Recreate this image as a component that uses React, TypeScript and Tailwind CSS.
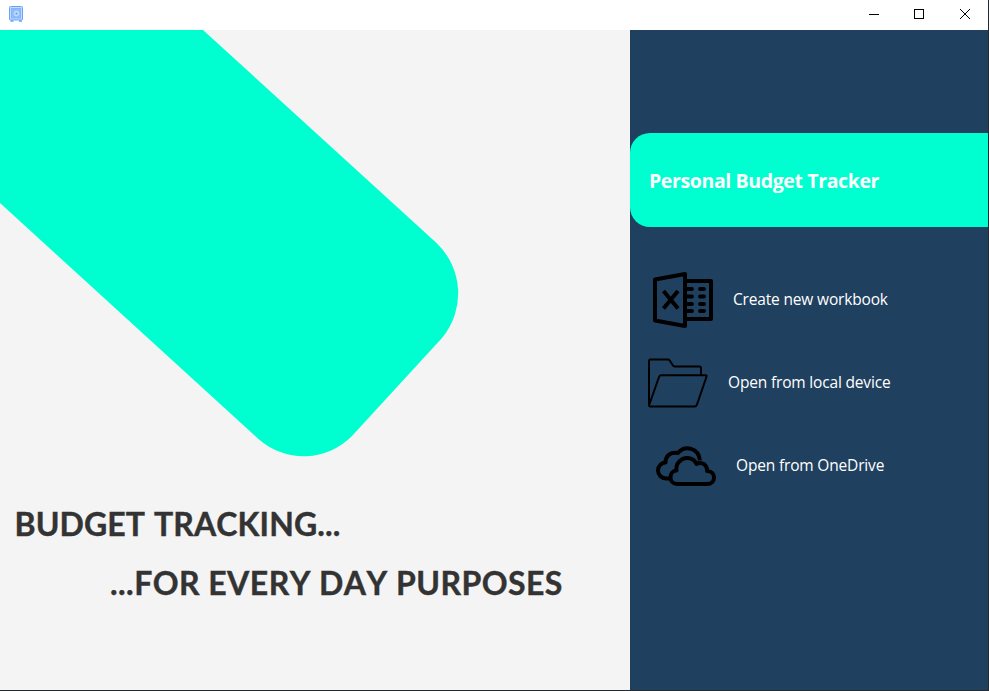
import React from "react";

function TitleBar() {
  return (
    <header className="flex h-[30px] shrink-0 items-start justify-between bg-white">
      <svg className="ml-2 mt-[5px] h-[18px] w-4" viewBox="0 0 16 18" fill="none">
        <rect x="1.500" y="1.500" width="13" height="13.500" rx="1" fill="#c3dcff" stroke="#6ba2f5" />
        <rect x="3.500" y="3.500" width="9" height="9.500" fill="#8fbafb" stroke="#85b4f8" />
        <circle cx="8.500" cy="8.500" r="2.400" fill="#a9ccff" stroke="#c9e0ff" />
        <circle cx="8.500" cy="8.500" r=".8" fill="#5c98f5" />
        <path d="M2.500 16h3M11 16h3" stroke="#6ba2f5" strokeWidth="1.400" />
      </svg>
      <svg className="h-[30px] w-[137px]" viewBox="0 0 137 30" fill="none" stroke="#000" strokeWidth="1">
        <path d="M18 14.500h10" />
        <rect x="63.500" y="9.500" width="9" height="9" />
        <path d="M109 9l10 10M119 9l-10 10" />
      </svg>
    </header>
  );
}

function WorkbookIcon() {
  return (
    <svg className="h-14 w-[60px] shrink-0" viewBox="0 0 60 56" fill="none" stroke="#000" strokeWidth="4" strokeLinejoin="round">
      <path d="M2 7.500L32 2v52L2 48.500z" />
      <path d="M33 9h25v38H33" />
      <path d="M10.500 19L25 36.500M25 19L10.500 36.500" />
      <path d="M34 17h5M34 24.500h5M34 32h5M34 39h5M47 17h4M47 24.500h4M47 32h4M47 39h4" strokeWidth="3.800" strokeLinecap="round" />
    </svg>
  );
}

function FolderIcon() {
  return (
    <svg className="h-[50px] w-[60px] shrink-0" viewBox="0 0 60 50" fill="none" stroke="#000" strokeWidth="2" strokeLinejoin="round">
      <path d="M1 47V3q0-1.500 1.500-1.500H20q1 0 1.500.8L25 7.500q.6 1 1.500 1H51.500q1.500 0 1.500 1.500v7" />
      <path d="M1.200 47L11 19q.6-1.800 2.500-1.800H57.500q1.500 0 1 1.500L49 46.500q-.6 2-2.500 2H2.500Q.7 48.500 1.200 47z" />
    </svg>
  );
}

function CloudIcon() {
  return (
    <svg className="h-10 w-[60px] shrink-0" viewBox="0 0 60 40" fill="none" stroke="#000" strokeWidth="4" strokeLinejoin="round">
      <path d="M13.500 32.500H10.500C5.500 32.500 2 29 2 24.500C2 20 5.500 16.600 9.500 16.500C9.500 9.500 15 5.500 22 7C29-1 42.500 1.500 44 14.500" />
      <path d="M21 38C17 38 14.500 34.800 14.500 31.200C14.500 27.500 17 24.500 20.500 24.500C19.500 17.500 25 12 31 12C36 12 39 14.500 40.500 18C46 15 51.500 19 51 25C55.500 25 58 28 58 31.500C58 35 55.500 38 51 38z" />
    </svg>
  );
}

function Action({ className, label, children }: { className: string; label: string; children: React.ReactNode }) {
  return (
    <button className={`flex items-center gap-5 text-left text-[15.5px] tracking-[-0.17px] text-white ${className}`}>
      {children}
      <span className="whitespace-nowrap pb-0.5 leading-6">{label}</span>
    </button>
  );
}

export default function App() {
  return (
    <div className="flex h-[691px] w-[989px] flex-col overflow-hidden border-b border-r border-[#252a2e] bg-[#f4f4f4] font-['Open_Sans','Noto_Sans',sans-serif]">
      <TitleBar />
      <div className="flex min-h-0 flex-1">
        <main className="flex w-[630px] flex-col overflow-hidden text-[#333333]">
          <svg className="h-[470px] w-[630px] shrink-0" viewBox="0 0 630 470" fill="#00ffd0">
            <path d="M0 0H203L436 212.500A69.500 69.500 0 0 1 442 308L352 406A68 68 0 0 1 259 409.500L0 173z" />
          </svg>
          <h1 className="ml-[14.5px] whitespace-nowrap font-['Lato',sans-serif] text-[32px] font-bold leading-[48px] tracking-[0.1px] [font-kerning:none] [word-spacing:1px] [-webkit-text-stroke:0.4px_#333333]">BUDGET TRACKING...</h1>
          <h1 className="ml-[110px] mt-[11px] whitespace-nowrap font-['Lato',sans-serif] text-[32px] font-bold leading-[48px] tracking-[0.45px] [font-kerning:none] [-webkit-text-stroke:0.4px_#333333]">...FOR EVERY DAY PURPOSES</h1>
        </main>
        <aside className="flex min-w-0 flex-1 flex-col bg-[#20405f] pt-[103px]">
          <div className="flex h-[94px] items-center rounded-l-[20px] bg-[#00ffd0] pl-[19px] pt-0.5">
            <h2 className="whitespace-nowrap text-[19.5px] font-bold leading-7 tracking-[-0.38px] text-white">Personal Budget Tracker</h2>
          </div>
          <nav className="flex flex-col items-start">
            <Action className="ml-[23px] mt-[45px]" label="Create new workbook"><WorkbookIcon /></Action>
            <Action className="ml-[18px] mt-[30px]" label="Open from local device"><FolderIcon /></Action>
            <Action className="ml-[26px] mt-[38px]" label="Open from OneDrive"><CloudIcon /></Action>
          </nav>
        </aside>
      </div>
    </div>
  );
}
